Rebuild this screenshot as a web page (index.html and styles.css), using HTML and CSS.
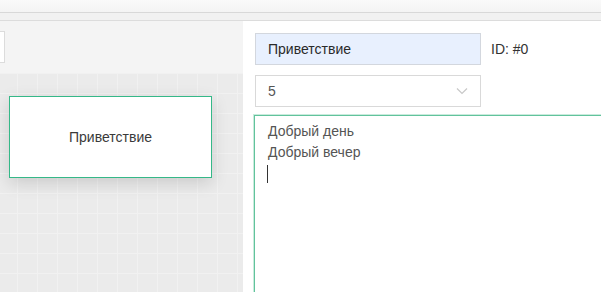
FILE: index.html
```html
<!DOCTYPE html>
<html lang="ru">
<head>
<meta charset="utf-8">
<link rel="stylesheet" href="styles.css">
</head>
<body>
<div class="app">
  <div class="topbar"></div>
  <div class="tabbar"></div>
  <div class="main">
    <div class="left">
      <div class="toolbar"><div class="tool-input"></div></div>
      <div class="canvas">
        <div class="node">Приветствие</div>
      </div>
    </div>
    <div class="right">
      <div class="row">
        <div class="field name">Приветствие</div>
        <div class="id">ID: #0</div>
      </div>
      <div class="field select">
        <span>5</span>
        <svg class="chev" width="12" height="8" viewBox="0 0 12 8"><path d="M1 1.5 L6 6.5 L11 1.5" fill="none" stroke="#c8c8c8" stroke-width="1.2"/></svg>
      </div>
      <div class="textarea">
        <div class="line">Добрый день</div>
        <div class="line">Добрый вечер</div>
        <div class="line"><span class="caret"></span></div>
      </div>
    </div>
  </div>
</div>
</body>
</html>
```

FILE: styles.css
```css
html, body {
  margin: 0;
  padding: 0;
  width: 601px;
  height: 292px;
  overflow: hidden;
  font-family: "Liberation Sans", Arial, sans-serif;
  font-size: 14px;
}
.app {
  display: flex;
  flex-direction: column;
  height: 292px;
}
.topbar {
  height: 12px;
  background: linear-gradient(#fafafa, #f4f4f4);
  border-bottom: 1px solid #d8d8d8;
}
.tabbar {
  height: 7px;
  background: #f1f1f1;
  border-bottom: 1px solid #dcdcdc;
}
.main {
  flex: 1;
  display: flex;
  min-height: 0;
}
.left {
  width: 243px;
  display: flex;
  flex-direction: column;
  background: #f4f4f4;
}
.toolbar {
  height: 52px;
  padding-top: 10px;
  box-sizing: border-box;
  overflow: hidden;
}
.tool-input {
  width: 40px;
  height: 32px;
  margin-left: -35px;
  box-sizing: border-box;
  background: #fff;
  border: 1px solid #dcdcdc;
}
.canvas {
  flex: 1;
  background-color: #ebebeb;
  background-image:
    linear-gradient(to right, #f1f1f1 1px, transparent 1px),
    linear-gradient(to bottom, #f1f1f1 1px, transparent 1px);
  background-size: 20px 20px;
  background-position: 17px 0;
  padding: 23px 0 0 9px;
}
.node {
  width: 203px;
  height: 82px;
  box-sizing: border-box;
  background: #fff;
  border: 1px solid #35b888;
  display: flex;
  align-items: center;
  justify-content: center;
  color: #3a3a3a;
  box-shadow: 0 5px 16px rgba(0, 0, 0, 0.14);
}
.right {
  flex: 1;
  background: #fff;
  padding: 12px 0 0 12px;
  display: flex;
  flex-direction: column;
  min-width: 0;
}
.row {
  display: flex;
  align-items: center;
  gap: 10px;
}
.field {
  width: 226px;
  height: 32px;
  box-sizing: border-box;
  border: 1px solid #d9d9d9;
  padding-left: 12px;
  display: flex;
  align-items: center;
}
.name {
  background: #e8f0fe;
  border-color: #d3d7de;
  color: #2a2a2a;
}
.id {
  color: #333;
}
.select {
  margin-top: 10px;
  color: #555;
  justify-content: space-between;
  padding-right: 12px;
}
.chev {
  display: block;
}
.textarea {
  margin-top: 8px;
  margin-left: -1px;
  flex: 1;
  box-sizing: border-box;
  border: 1px solid #62c39c;
  border-right: none;
  border-bottom: none;
  box-shadow: 0 0 0 1px #c9ebdd;
  padding: 5px 0 0 13px;
  color: #555;
  line-height: 21px;
}
.line {
  height: 21px;
}
.caret {
  display: inline-block;
  width: 1px;
  height: 18px;
  background: #333;
  vertical-align: middle;
  margin-left: -1px;
}
```
